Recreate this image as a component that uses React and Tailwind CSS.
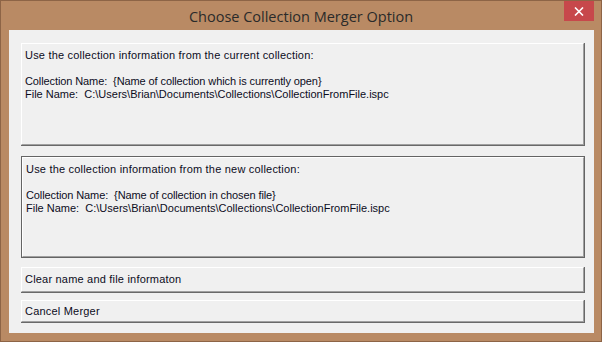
import React from "react";

const options = [
  {
    heading: "Use the collection information from the current collection:",
    name: "{Name of collection which is currently open}",
    file: "C:\\Users\\Brian\\Documents\\Collections\\CollectionFromFile.ispc",
  },
  {
    heading: "Use the collection information from the new collection:",
    name: "{Name of collection in chosen file}",
    file: "C:\\Users\\Brian\\Documents\\Collections\\CollectionFromFile.ispc",
    focused: true,
  },
];

// classic 3D push button look
function Bevel({ focused, className, children }) {
  const inner =
    "border-t border-l border-t-white border-l-white border-r border-b border-r-[#a0a0a0] border-b-[#a0a0a0] bg-[#f0f0f0]";
  return (
    <div
      className={`${className} ${
        focused ? "border border-[#646464]" : "border-r border-b border-r-[#696969] border-b-[#696969]"
      }`}
    >
      <div className={`${inner} h-full w-full text-left`}>{children}</div>
    </div>
  );
}

export default function App() {
  return (
    <div className="w-[602px] h-[342px] bg-[#b98a64] border border-[#8d6446] flex flex-col font-['Liberation_Sans',Arial,sans-serif]">
      <div className="h-[29px] flex items-center justify-center relative">
        <span className="text-[14.5px] text-[#2a2a2a] font-['Open_Sans',sans-serif] mt-[2px]">
          Choose Collection Merger Option
        </span>
        <button className="absolute right-[7px] top-0 w-[30px] h-[20px] bg-[#c7484b] flex items-center justify-center">
          <svg width="10" height="9" viewBox="0 0 10 9">
            <path d="M1 0.5L9 8.5M9 0.5L1 8.5" stroke="white" strokeWidth="1.6" />
          </svg>
        </button>
      </div>
      <div className="flex-1 ml-[8px] mr-[7px] mb-[8px] bg-[#f0f0f0] pt-[13px] pl-[12px] pr-[9px] flex flex-col text-[11px] leading-[13px] text-[#0c0c1c]">
        {options.map((o, i) => (
          <Bevel
            key={i}
            focused={o.focused}
            className={i === 0 ? "h-[103px]" : "h-[102px] mt-[10px]"}
          >
            <div className="pl-[3px] pt-[5px]">
              <p className="tracking-[0.2px]">{o.heading}</p>
              <p className="mt-[13px] tracking-[-0.1px]">Collection Name:&nbsp;&nbsp;{o.name}</p>
              <p>File Name:&nbsp;&nbsp;{o.file}</p>
            </div>
          </Bevel>
        ))}
        <Bevel className="h-[26px] mt-[9px]">
          <div className="pl-[3px] h-full flex items-center tracking-[0.2px]">Clear name and file informaton</div>
        </Bevel>
        <Bevel className="h-[23px] mt-[7px]">
          <div className="pl-[3px] h-full flex items-center tracking-[0.2px]">Cancel Merger</div>
        </Bevel>
      </div>
    </div>
  );
}
